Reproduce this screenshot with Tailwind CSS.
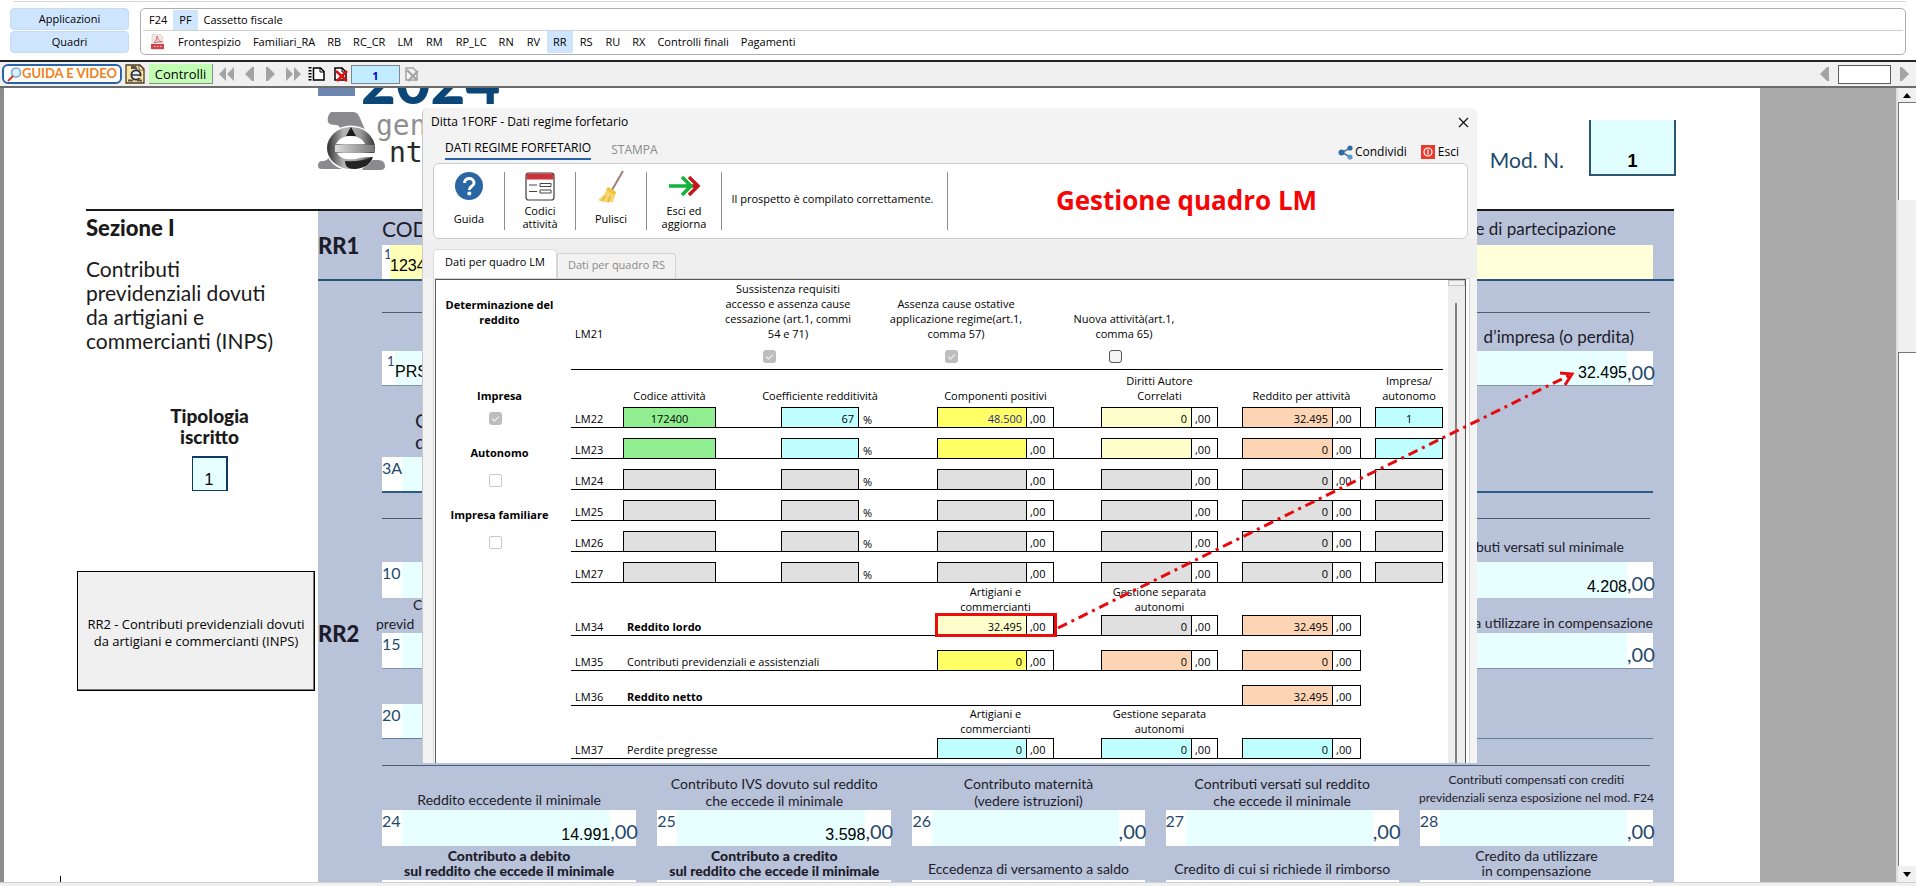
<!DOCTYPE html>
<html lang="it">
<head>
<meta charset="utf-8">
<title>Ditta 1FORF - Dati regime forfetario</title>
<script src="https://cdn.jsdelivr.net/npm/@tailwindcss/browser@4"></script>
</head>
<body class="flex h-screen flex-col overflow-hidden bg-white font-['Open_Sans','Noto_Sans',sans-serif] text-[11px] text-black">

<!-- Application menu -->
<header class="shrink-0 px-[10px] pb-[5px]">
  <div class="ml-1 h-[2px] border-b border-[#d4d4d4]"></div>
  <div class="mt-[6px] flex gap-[11px]">
    <div class="flex w-[119px] flex-col gap-px">
      <button class="h-[22px] rounded-[4px] border border-[#c3dcf5] bg-[#cfe5fd]">Applicazioni</button>
      <button class="h-[22px] rounded-[4px] border border-[#c3dcf5] bg-[#cfe5fd]">Quadri</button>
    </div>
    <nav class="h-[47px] flex-1 rounded-[5px] border border-[#adadad] px-[2px]">
      <div class="flex h-[22px] items-stretch border-b border-[#cfcfcf] pt-px">
        <a href="#" class="flex items-center px-[6px]">F24</a>
        <a href="#" class="flex items-center bg-[#cfe5fd] px-[6px]">PF</a>
        <a href="#" class="flex items-center px-[6px]">Cassetto fiscale</a>
      </div>
      <div class="flex h-[22px] items-stretch">
        <a href="#" aria-label="PDF" class="flex w-[29px] items-center pl-[8px]">
          <svg width="13" height="16" viewBox="0 0 13 16"><path d="M1 0h8l3 3v13H1z" fill="#f1e6e6" stroke="#d9c4c4" stroke-width=".6"/><path d="M3 9c2-2 3-4 3-7 1 4 2 5 5 6-3-.5-5 0-8 1z" fill="none" stroke="#d0565a" stroke-width=".9"/><path d="M0 10h13v5H0z" fill="#cf4448"/><path d="M3 12.5h1.5M6 12.5h1.5M9 12.5h1.5" stroke="#f5d0d0"/></svg>
        </a>
        <a href="#" class="flex items-center px-[6px]">Frontespizio</a>
        <a href="#" class="flex items-center px-[6px]">Familiari_RA</a>
        <a href="#" class="flex items-center px-[6px]">RB</a>
        <a href="#" class="flex items-center px-[6px]">RC_CR</a>
        <a href="#" class="flex items-center px-[6px]">LM</a>
        <a href="#" class="flex items-center px-[7px]">RM</a>
        <a href="#" class="flex items-center px-[6px]">RP_LC</a>
        <a href="#" class="flex items-center px-[6px]">RN</a>
        <a href="#" class="flex items-center px-[7px]">RV</a>
        <a href="#" class="flex items-center bg-[#cfe5fd] px-[6px]">RR</a>
        <a href="#" class="flex items-center px-[7px]">RS</a>
        <a href="#" class="flex items-center px-[6px]">RU</a>
        <a href="#" class="flex items-center px-[6px]">RX</a>
        <a href="#" class="flex items-center px-[6px]">Controlli finali</a>
        <a href="#" class="flex items-center px-[6px]">Pagamenti</a>
      </div>
    </nav>
  </div>
</header>

<!-- Form toolbar -->
<div class="flex h-[28px] shrink-0 items-center border-y-2 border-t-[#222] border-b-[#6c6c6c] bg-[#f0f0f0] pl-[2px] pr-[6px]">
  <button class="flex h-[20px] w-[120px] items-center justify-center whitespace-nowrap rounded-[6px] border-2 border-[#2b64a6] bg-white font-['Lato',sans-serif] text-[13px] font-bold text-[#ee8222]">
    <svg width="15" height="15" viewBox="0 0 15 15"><circle cx="9" cy="5.500" r="4.500" fill="#dceffc" stroke="#7aa6d4" stroke-width="1.500"/><path d="M6 9L1 14" stroke="#d93a2b" stroke-width="2"/></svg>
    GUIDA E VIDEO
  </button>
  <button aria-label="Entrate" class="ml-[3px]">
    <svg class="block" width="20" height="20" viewBox="0 0 20 20"><path d="M1 1h14l4 4v14H1z" fill="#fbe3a2" stroke="#4c3d1c" stroke-width="1.300"/><path d="M14 1v5h5z" fill="#fff3cc" stroke="#4c3d1c" stroke-width=".8"/><path d="M6 2h5l2 4-3-1H6z" fill="#555"/><circle cx="11" cy="11" r="4.600" fill="#e8eefc" stroke="#2a2a33" stroke-width="1.800"/><path d="M7 11h8" stroke="#2a2a33" stroke-width="1.400"/><path d="M12 12.300h5v1.800h-5z" fill="#fbe3a2"/><path d="M3 16.500h5M12 16.500h5" stroke="#555" stroke-width="1.800"/></svg>
  </button>
  <button class="ml-1 h-[20px] w-[64px] border-b border-r border-[#8a8a8a] bg-[#c2ffb4] text-[13px] leading-[18px]">Controlli</button>
  <div class="ml-[6px] flex items-center gap-[10px]">
    <button aria-label="Primo"><svg class="block" width="15" height="14" viewBox="0 0 15 14" fill="#a3a3a3"><path d="M7 0v14L0 7zM15 0v14L8 7z"/></svg></button>
    <button aria-label="Precedente"><svg class="block" width="11" height="14" viewBox="0 0 11 14" fill="#a3a3a3"><path d="M8 0h2v14H8L1 7z"/></svg></button>
    <button aria-label="Successivo"><svg class="block" width="11" height="14" viewBox="0 0 11 14" fill="#a3a3a3"><path d="M3 0H1v14h2l7-7z"/></svg></button>
    <button aria-label="Ultimo"><svg class="block" width="15" height="14" viewBox="0 0 15 14" fill="#a3a3a3"><path d="M0 0v14l7-7zM8 0v14l7-7z"/></svg></button>
  </div>
  <button aria-label="Nuovo modulo" class="ml-[7px]"><svg class="block" width="17" height="14" viewBox="0 0 17 14"><path d="M5.500 1h7l3.500 3.500V13H5.500z" fill="#fff" stroke="#000" stroke-width="1.500"/><path d="M12 1v4h4" fill="none" stroke="#000"/><path d="M2 0v14" stroke="#000" stroke-width="3" stroke-dasharray="1.500 1.500"/></svg></button>
  <button aria-label="Elimina modulo" class="ml-[8px]"><svg class="block" width="16" height="15" viewBox="0 0 16 15"><path d="M2 1h7l4 4v8H2z" fill="#fff" stroke="#000" stroke-width="1.500"/><path d="M9 1v4h4" fill="none" stroke="#000"/><path d="M3 4l11 10M14 4L4 14" stroke="#e01010" stroke-width="2.600"/></svg></button>
  <input aria-label="Modulo" value="1" class="ml-[2px] h-[19px] w-[49px] border border-[#7d8790] bg-[#c1ecff] pt-[3px] text-center font-bold text-[#0000c8]">
  <button aria-label="Elimina" class="ml-[4px]"><svg class="block" width="16" height="15" viewBox="0 0 16 15"><path d="M2 1h7l4 4v8H2z" fill="#f4f4f4" stroke="#a3a3a3" stroke-width="1.500"/><path d="M3 3l10 10M14 4L4 14" stroke="#a3a3a3" stroke-width="2.200"/></svg></button>
  <div class="ml-auto flex items-center gap-[8px]">
    <button aria-label="Indietro"><svg class="block" width="11" height="14" viewBox="0 0 11 14" fill="#a3a3a3"><path d="M8 0h2v14H8L1 7z"/></svg></button>
    <input aria-label="Cerca" class="h-[19px] w-[53px] border border-[#5c5c5c] bg-white">
    <button aria-label="Avanti"><svg class="block" width="11" height="14" viewBox="0 0 11 14" fill="#a3a3a3"><path d="M3 0H1v14h2l7-7z"/></svg></button>
  </div>
</div>

<main class="relative flex min-h-0 flex-1 overflow-hidden border-l-4 border-[#8c8c8c]">

  <!-- Tax form page -->
  <section class="w-[1756px] shrink-0 font-['Lato',sans-serif] text-[#1c1c2a]">
    <div class="flex h-[121px] justify-between pl-[314px] pr-[84px]">
      <div>
        <div class="flex h-[16px] items-end gap-[6px] overflow-hidden">
          <div class="h-[8px] w-[37px] self-start bg-[#6c86b0]"></div>
          <div class="text-[60px] font-black leading-[46px] text-[#0b4679]">2024</div>
        </div>
        <div class="mt-[8px] flex">
          <svg width="67" height="58" viewBox="0 0 67 58" class="shrink-0">
            <defs>
              <linearGradient id="ring" x1="0" y1="0" x2="1" y2="0"><stop offset="0" stop-color="#2e2e2e"/><stop offset=".35" stop-color="#b5b5b5"/><stop offset=".7" stop-color="#9a9a9a"/><stop offset="1" stop-color="#333"/></linearGradient>
              <linearGradient id="bar" x1="0" y1="0" x2="1" y2="0"><stop offset="0" stop-color="#dcdcdc"/><stop offset="1" stop-color="#777"/></linearGradient>
            </defs>
            <path d="M14 0h20c5 0 6 2 8 6l6 14-14-5-12 2c0-3-2-4-4-4-8 0-9-3-8-8 1-3 2-5 4-5z" fill="#8b8b8d"/>
            <path d="M0 54c0-5 3-5 6-5 4-1 5-4 7-7l12 15H4c-3 0-4-1-4-3zM50 48h10c5 0 7 3 7 6s-2 4-5 4H44z" fill="#8b8b8d"/>
            <ellipse cx="33" cy="36" rx="25.500" ry="22.500" fill="#fff"/>
            <ellipse cx="33" cy="36" rx="24" ry="21" fill="url(#ring)"/>
            <path d="M33 15l5 9H28z" fill="#1d1d1d"/>
            <path d="M18 32c3-6 9-8 15-8s12 3 14 8z" fill="#fff"/>
            <path d="M17 33h39l1 7H17z" fill="url(#bar)"/>
            <path d="M19 41h39v4c-7 0-14 0-20 2-8 1-16 0-19-6z" fill="#fff"/>
            <path d="M27 49c9 1 17 0 28-4-2 7-9 12-19 12-6 0-9-3-9-8z" fill="#232323"/>
          </svg>
          <div class="-ml-[9px] font-['DejaVu_Sans_Mono',monospace] text-[28px] leading-[27px]">
            <div class="text-[#8f8f8f]">gen</div>
            <div class="pl-[13px] text-[#2b2b2b]">nt</div>
          </div>
        </div>
      </div>
      <div class="flex items-end gap-[25px] pb-[33px]">
        <span class="pb-1 text-[21px] leading-[24px] text-[#1d4a6c]">Mod. N.</span>
        <input aria-label="Modulo numero" value="1" class="h-[56px] w-[87px] border-2 border-t-0 border-[#2a5673] bg-[#e0feff] pt-[28px] text-center font-['Liberation_Sans',sans-serif] text-[18px] font-bold text-black">
      </div>
    </div>

    <div class="ml-[82px] flex h-[673px] w-[1588px] border-t-2 border-[#1a1a1a]">
      <aside class="flex w-[232px] shrink-0 flex-col items-start pt-[3px] text-[#1a1a1a]">
        <h2 class="text-[22px] font-black leading-[28px]">Sezione I</h2>
        <p class="mt-[15px] whitespace-nowrap text-[21px] leading-[24px]">Contributi<br>previdenziali dovuti<br>da artigiani e<br>commercianti (INPS)</p>
        <div class="mt-[52px] flex w-full flex-col items-center pl-[15px]">
          <label for="tipologia" class="text-center text-[19px] font-black leading-[21px]">Tipologia<br>iscritto</label>
          <input id="tipologia" value="1" class="mt-[9px] h-[35px] w-[36px] border border-r-2 border-t-2 border-[#0c3c66] bg-[#e6ffff] pt-[12px] text-center font-['Liberation_Sans',sans-serif] text-[16px] text-black">
        </div>
        <button class="-ml-[9px] mt-[80px] h-[120px] w-[238px] border border-black bg-[#f0f0f0] pt-[3px] font-['Open_Sans',sans-serif] text-[13px] font-normal leading-[17px] text-black shadow-[inset_-1px_-1px_0_#777]">RR2 - Contributi previdenziali dovuti<br>da artigiani e commercianti (INPS)</button>
        <div class="-ml-[26px] mt-auto h-[6px] w-px bg-black"></div>
      </aside>

      <div class="flex flex-1 flex-col bg-[#b8c2d9]">
        <!-- RR1 -->
        <div class="flex h-[70px] shrink-0 border-b-2 border-[#2b5479]">
          <h3 class="w-[64px] pt-[21px] text-[22px] font-black leading-[28px]">RR1</h3>
          <div class="flex w-[1271px] flex-col">
            <div class="flex h-[34px] justify-between pr-[37px] pt-[6px] text-[21px] leading-[24px]"><span>COD</span><span class="text-[17px]">e di partecipazione</span></div>
            <div class="flex h-[34px] bg-[#ffffd9]">
              <span class="w-[8px] bg-white pl-[2px] text-[13px] leading-[18px] text-[#1d4a6c]">1</span>
              <input aria-label="Codice INPS" value="1234" class="w-[200px] bg-[#ffffb8] pt-[8px] font-['Liberation_Sans',sans-serif] text-[16px] text-black">
            </div>
          </div>
        </div>
        <!-- RR2 -->
        <div class="flex min-h-0 flex-1">
          <h3 class="w-[64px] pt-[339px] text-[22px] font-black leading-[28px]">RR2</h3>
          <div class="flex w-[1271px] flex-col">
            <div class="mr-[3px] h-[32px] shrink-0 border-b border-[#4d5a73]"></div>
            <div class="flex h-[38px] shrink-0 items-end justify-end pb-[3px] pr-[19px] text-[17px] leading-[22px]">d’impresa (o perdita)</div>
            <div class="flex h-[35px] shrink-0 border-b border-[#8391ab] bg-[#e8ffff]">
              <span class="w-[13px] bg-white pl-[5px] text-[13px] leading-[20px] text-[#1d4a6c]">1</span>
              <input aria-label="Codice fiscale" value="PRS" class="w-[200px] pt-[8px] font-['Liberation_Sans',sans-serif] text-[16px] text-black">
              <div class="ml-auto flex"><input aria-label="Reddito d'impresa" value="32.495" class="w-[120px] pt-[10px] text-right font-['Liberation_Sans',sans-serif] text-[16px] text-black"><span class="w-[26px] bg-white pt-[9px] text-right text-[20px] leading-[24px] text-[#1d4a6c]">,00</span></div>
            </div>
            <div class="flex h-[71px] shrink-0 items-end pb-[5px] pl-[33px] text-[20px] leading-[21px]"><span>C<br>d</span></div>
            <div class="flex h-[36px] shrink-0 border-b-2 border-[#2b5c85]"><span class="w-[20px] bg-white text-[16px] leading-[22px] text-[#1d4a6c]">3A</span><span class="w-[300px] bg-[#e8ffff]"></span></div>
            <div class="mr-[3px] h-[26px] shrink-0 border-b border-[#4d5a73]"></div>
            <div class="flex h-[43px] shrink-0 items-end justify-end pb-[5px] pr-[29px] text-[14px] leading-[20px]">ributi versati sul minimale</div>
            <div class="flex h-[36px] shrink-0 bg-[#e8ffff]">
              <span class="w-[20px] bg-white text-[16px] leading-[22px] text-[#1d4a6c]">10</span>
              <div class="ml-auto flex"><input aria-label="Contributi versati sul minimale" value="4.208" class="w-[120px] pt-[14px] text-right font-['Liberation_Sans',sans-serif] text-[16px] text-black"><span class="w-[26px] bg-white pt-[9px] text-right text-[20px] leading-[24px] text-[#1d4a6c]">,00</span></div>
            </div>
            <div class="-ml-[6px] flex h-[35px] shrink-0 items-end justify-between whitespace-nowrap text-[14px] leading-[19px]"><span><span class="pl-[37px]">C</span><br>previd</span><span class="pb-px">a utilizzare in compensazione</span></div>
            <div class="flex h-[36px] shrink-0 border-b border-[#8391ab] bg-[#e8ffff]">
              <span class="w-[20px] bg-white text-[16px] leading-[22px] text-[#1d4a6c]">15</span>
              <span class="ml-auto w-[26px] bg-white pt-[9px] text-right text-[20px] leading-[24px] text-[#1d4a6c]">,00</span>
            </div>
            <div class="h-[35px] shrink-0"></div>
            <div class="flex h-[35px] shrink-0 border-b border-[#5e80a3]"><span class="w-[20px] bg-white text-[16px] leading-[22px] text-[#1d4a6c]">20</span><span class="w-[300px] bg-[#e8ffff]"></span></div>
            <div class="mr-[3px] h-[27px] shrink-0 border-b border-[#4d5a73]"></div>
            <div class="grid min-h-0 flex-1 grid-cols-[minmax(0,254fr)_minmax(0,234fr)_minmax(0,232fr)_minmax(0,233fr)_minmax(0,233fr)] gap-x-[21px] text-[14px] leading-[17px]">
              <div class="flex flex-col">
                <label for="f24" class="flex h-[44px] items-end justify-center whitespace-nowrap pb-[2px] text-center">Reddito eccedente il minimale</label>
                <div class="flex h-[36px] bg-[#e8ffff]"><span class="w-[20px] bg-white text-[16px] leading-[22px] text-[#1d4a6c]">24</span><input id="f24" value="14.991" class="min-w-0 flex-1 pt-[13px] text-right font-['Liberation_Sans',sans-serif] text-[16px] text-black"><span class="w-[26px] bg-white pt-[9px] text-right text-[20px] leading-[24px] text-[#1d4a6c]">,00</span></div>
                <div class="flex h-[34px] items-center justify-center whitespace-nowrap text-center font-black leading-[15px]">Contributo a debito<br>sul reddito che eccede il minimale</div>
                <div class="h-[2px] bg-white"></div>
              </div>
              <div class="flex flex-col">
                <label for="f25" class="flex h-[44px] items-end justify-center whitespace-nowrap pb-[1px] text-center">Contributo IVS dovuto sul reddito<br>che eccede il minimale</label>
                <div class="flex h-[36px] bg-[#e8ffff]"><span class="w-[20px] bg-white text-[16px] leading-[22px] text-[#1d4a6c]">25</span><input id="f25" value="3.598" class="min-w-0 flex-1 pt-[13px] text-right font-['Liberation_Sans',sans-serif] text-[16px] text-black"><span class="w-[26px] bg-white pt-[9px] text-right text-[20px] leading-[24px] text-[#1d4a6c]">,00</span></div>
                <div class="flex h-[34px] items-center justify-center whitespace-nowrap text-center font-black leading-[15px]">Contributo a credito<br>sul reddito che eccede il minimale</div>
                <div class="h-[2px] bg-white"></div>
              </div>
              <div class="flex flex-col">
                <label for="f26" class="flex h-[44px] items-end justify-center whitespace-nowrap pb-[1px] text-center">Contributo maternità<br>(vedere istruzioni)</label>
                <div class="flex h-[36px] bg-[#e8ffff]"><span class="w-[20px] bg-white text-[16px] leading-[22px] text-[#1d4a6c]">26</span><input id="f26" class="min-w-0 flex-1"><span class="w-[26px] bg-white pt-[9px] text-right text-[20px] leading-[24px] text-[#1d4a6c]">,00</span></div>
                <div class="flex h-[34px] items-end justify-center whitespace-nowrap pb-[3px] text-center">Eccedenza di versamento a saldo</div>
                <div class="h-[2px] bg-white"></div>
              </div>
              <div class="flex flex-col">
                <label for="f27" class="flex h-[44px] items-end justify-center whitespace-nowrap pb-[1px] text-center">Contributi versati sul reddito<br>che eccede il minimale</label>
                <div class="flex h-[36px] bg-[#e8ffff]"><span class="w-[20px] bg-white text-[16px] leading-[22px] text-[#1d4a6c]">27</span><input id="f27" class="min-w-0 flex-1"><span class="w-[26px] bg-white pt-[9px] text-right text-[20px] leading-[24px] text-[#1d4a6c]">,00</span></div>
                <div class="flex h-[34px] items-end justify-center whitespace-nowrap pb-[3px] text-center">Credito di cui si richiede il rimborso</div>
                <div class="h-[2px] bg-white"></div>
              </div>
              <div class="flex flex-col">
                <label for="f28" class="flex h-[44px] items-end justify-center whitespace-nowrap pb-[3px] text-center text-[12px] leading-[18px]">Contributi compensati con crediti<br>previdenziali senza esposizione nel mod. F24</label>
                <div class="flex h-[36px] bg-[#e8ffff]"><span class="w-[20px] bg-white text-[16px] leading-[22px] text-[#1d4a6c]">28</span><input id="f28" class="min-w-0 flex-1"><span class="w-[26px] bg-white pt-[9px] text-right text-[20px] leading-[24px] text-[#1d4a6c]">,00</span></div>
                <div class="flex h-[34px] items-center justify-center whitespace-nowrap text-center leading-[15px]">Credito da utilizzare<br>in compensazione</div>
                <div class="h-[2px] bg-white"></div>
              </div>
            </div>
          </div>
        </div>
      </div>
    </div>
  </section>
  <div class="flex-1 bg-[#ababab]"></div>

  <!-- Page scrollbar -->
  <div class="flex w-[20px] shrink-0 flex-col border-l-2 border-[#dedede] bg-[#f0f0f0]">
    <button aria-label="Su" class="flex h-[15px] items-center justify-center border-b border-[#777]"><svg width="8" height="5" viewBox="0 0 8 5"><path d="M4 0l4 5H0z"/></svg></button>
    <div class="h-[97px] border-l border-[#777] bg-white"></div>
    <div class="h-[152px]"></div>
    <div class="flex-1 border-l border-t border-[#777] bg-white"></div>
    <button aria-label="Giù" class="flex h-[16px] items-center justify-center"><svg width="8" height="5" viewBox="0 0 8 5"><path d="M4 5l4-5H0z"/></svg></button>
  </div>

  <!-- Dialog window -->
  <div role="dialog" aria-label="Dati regime forfetario" class="absolute left-[418px] top-[20px] flex h-[655px] w-[1055px] flex-col overflow-hidden rounded-t-[6px] border-l border-[#c9c9c9] bg-[#f3f3f3]">
    <div class="flex h-[28px] shrink-0 items-center justify-between pl-[8px] pr-[8px]">
      <span class="text-[12px]">Ditta 1FORF - Dati regime forfetario</span>
      <button aria-label="Chiudi"><svg class="block" width="11" height="11" viewBox="0 0 11 11"><path d="M1 1l9 9M10 1l-9 9" stroke="#111" stroke-width="1.200"/></svg></button>
    </div>
    <div class="flex h-[27px] shrink-0 items-start justify-between pl-[22px] pr-[18px] text-[12px]">
      <div class="flex gap-[20px]">
        <button class="border-b-2 border-[#2a62a8] pb-[2px] pt-[4px] leading-[16px]">DATI REGIME FORFETARIO</button>
        <button class="pb-px pt-[4px] leading-[16px] text-[#8a8a8a]">STAMPA</button>
      </div>
      <div class="flex gap-[14px] pt-[7px]">
        <button class="flex items-center gap-[2px]"><svg width="15" height="15" viewBox="0 0 15 15"><path d="M12 3L4 7.500l8 4.500" fill="none" stroke="#4a7aa8" stroke-width="1.500"/><circle cx="12" cy="3" r="2.600" fill="#2f6ca3"/><circle cx="3.500" cy="7.500" r="3" fill="#2f6ca3"/><circle cx="12" cy="12" r="2.600" fill="#5a9ad0"/></svg>Condividi</button>
        <button class="flex items-center gap-[3px]"><svg width="14" height="14" viewBox="0 0 14 14"><path d="M0 0h14v14H0z" fill="#e8392c"/><circle cx="7" cy="7" r="4" fill="none" stroke="#fff" stroke-width="1.200"/><path d="M7 4.500v5" stroke="#fff" stroke-width="1.300"/></svg>Esci</button>
      </div>
    </div>
    <div class="ml-[10px] mr-[9px] flex h-[76px] shrink-0 items-center rounded-[6px] border border-[#cdcdcd] bg-white">
      <button class="flex h-[58px] w-[71px] flex-col items-center border-r border-[#8f8f8f] leading-[13px]">
        <svg width="28" height="28" viewBox="0 0 28 28" class="mb-[12px] shrink-0"><circle cx="14" cy="14" r="14" fill="#2a66a4"/><path d="M9.500 11c0-6 9.500-6 9.500 0 0 3.500-4.700 3.200-4.700 7" fill="none" stroke="#fff" stroke-width="3"/><circle cx="14.300" cy="21.500" r="2" fill="#fff"/></svg>
        Guida
      </button>
      <button class="flex h-[58px] w-[71px] flex-col items-center border-r border-[#8f8f8f] leading-[13px]">
        <svg width="30" height="29" viewBox="0 0 30 29" class="mb-[3px] shrink-0"><rect x="1" y="1" width="28" height="27" rx="2.500" fill="#fff" stroke="#3a3a3a" stroke-width="1.200"/><path d="M1.500 3q0-1.500 1.500-1.500h24q1.500 0 1.500 1.500v4.500h-27z" fill="#c9353a"/><path d="M4 13h8M4 19.500h8" stroke="#444" stroke-width="1.200"/><path d="M15 11.500h11v3H15zM15 18h11v3H15z" fill="none" stroke="#444"/></svg>
        Codici<br>attività
      </button>
      <button class="flex h-[58px] w-[71px] flex-col items-center border-r border-[#8f8f8f] leading-[13px]">
        <svg width="28" height="33" viewBox="0 0 28 33" class="-mt-[2px] mb-[9px] shrink-0"><path d="M26 1L15 20" stroke="#a08072" stroke-width="2"/><path d="M11 17l8 5-3 10c-5 1-11 0-15-2 4-3 8-7 10-13z" fill="#f7d568"/><path d="M11 17l8 5-1 3-9-5z" fill="#f3c03c"/><path d="M8 26l-3 5M13 26l-2 6" stroke="#d8a93a"/></svg>
        Pulisci
      </button>
      <button class="flex h-[58px] w-[75px] flex-col items-center border-r border-[#8f8f8f] leading-[13px]">
        <svg width="33" height="22" viewBox="0 0 33 22" class="mb-[7px] mt-[3px] shrink-0"><path d="M21 2l9 9-9 9M21 11h8" fill="none" stroke="#c8161d" stroke-width="3.500"/><path d="M1 11h22M14 2l9 9-9 9" fill="none" stroke="#15b23c" stroke-width="3.500"/></svg>
        Esci ed<br>aggiorna
      </button>
      <p class="flex h-[58px] w-[226px] items-center justify-center whitespace-nowrap border-r border-[#8f8f8f] pb-[4px] pr-[4px]">Il prospetto è compilato correttamente.</p>
      <h1 class="flex-1 pb-[2px] pr-[42px] text-center text-[26px] font-bold text-[#f50505]">Gestione quadro LM</h1>
    </div>
    <div class="flex h-[39px] shrink-0 items-end bg-[#efefef] pl-[10px]">
      <button class="h-[29px] w-[124px] rounded-t-[5px] border border-b-0 border-[#dadada] bg-white pb-[4px]">Dati per quadro LM</button>
      <button class="h-[25px] w-[119px] rounded-tr-[4px] border border-b-0 border-[#d4d4d4] bg-[#f2f2f2] pb-[2px] text-[#8a8a8a]">Dati per quadro RS</button>
    </div>

    <div class="ml-[10px] mr-[7px] min-h-0 flex-1 border border-b-0 border-[#d4d4d4] bg-white">
      <div class="ml-px mr-[3px] flex h-full border border-b-0 border-[#555]">
        <div class="w-[135px] shrink-0 text-center font-bold leading-[15px]">
          <p class="pt-[17px] pr-[8px]">Determinazione del<br>reddito</p>
          <div class="mt-[61px] flex flex-col items-center pr-[8px]"><label for="impresa">Impresa</label>
            <span class="relative mr-[8px] mt-[9px]"><input id="impresa" type="checkbox" checked disabled class="block size-[13px] appearance-none rounded-[3px] bg-[#bdbdbd]"><svg class="absolute inset-0" width="13" height="13" viewBox="0 0 13 13"><path d="M3 6.500l2.500 2.500L10 4.500" fill="none" stroke="#e9e9e9" stroke-width="1.300"/></svg></span></div>
          <div class="mt-[20px] flex flex-col items-center pr-[8px]"><label for="autonomo">Autonomo</label><input id="autonomo" type="checkbox" disabled class="mr-[8px] mt-[14px] block size-[13px] appearance-none rounded-[2px] border border-[#c9c9c9] bg-white"></div>
          <div class="mt-[20px] flex flex-col items-center pr-[8px]"><label for="familiare">Impresa familiare</label><input id="familiare" type="checkbox" disabled class="mr-[8px] mt-[14px] block size-[13px] appearance-none rounded-[2px] border border-[#c9c9c9] bg-white"></div>
        </div>
        <div class="w-[872px] shrink-0">
          <div class="flex h-[89px] pb-[6px]">
            <span class="w-[133px] self-end pb-[22px] pl-[4px] leading-[15px]">LM21</span>
            <div class="flex w-[168px] flex-col items-center justify-end text-center leading-[15px]">
              <label for="c1">Sussistenza requisiti<br>accesso e assenza cause<br>cessazione (art.1, commi<br>54 e 71)</label>
              <span class="relative mr-[38px] mt-[9px]"><input id="c1" type="checkbox" checked disabled class="block size-[13px] appearance-none rounded-[3px] bg-[#bdbdbd]"><svg class="absolute inset-0" width="13" height="13" viewBox="0 0 13 13"><path d="M3 6.500l2.500 2.500L10 4.500" fill="none" stroke="#e9e9e9" stroke-width="1.300"/></svg></span>
            </div>
            <div class="flex w-[168px] flex-col items-center justify-end text-center leading-[15px]">
              <label for="c2">Assenza cause ostative<br>applicazione regime(art.1,<br>comma 57)</label>
              <span class="relative mr-[10px] mt-[9px]"><input id="c2" type="checkbox" checked disabled class="block size-[13px] appearance-none rounded-[3px] bg-[#bdbdbd]"><svg class="absolute inset-0" width="13" height="13" viewBox="0 0 13 13"><path d="M3 6.500l2.500 2.500L10 4.500" fill="none" stroke="#e9e9e9" stroke-width="1.300"/></svg></span>
            </div>
            <div class="flex w-[168px] flex-col items-center justify-end text-center leading-[15px]">
              <label for="c3">Nuova attività(art.1,<br>comma 65)</label>
              <input id="c3" type="checkbox" class="mr-[18px] mt-[9px] block size-[13px] appearance-none rounded-[3px] border border-[#555] bg-[#f5f5f5]">
            </div>
          </div>
          <table class="w-[872px] table-fixed border-collapse leading-[15px]">
            <colgroup>
              <col class="w-[52px]"><col class="w-[93px]"><col class="w-[65px]"><col class="w-[78px]"><col class="w-[78px]"><col class="w-[90px]"><col class="w-[27px]"><col class="w-[47px]"><col class="w-[91px]"><col class="w-[26px]"><col class="w-[24px]"><col class="w-[91px]"><col class="w-[28px]"><col class="w-[14px]"><col class="w-[68px]">
            </colgroup>
            <tbody id="rows"></tbody>
          </table>
        </div>
        <div class="ml-auto flex w-[17px] flex-col bg-[#ededed]">
          <div class="h-[6px] border border-[#c4c4c4] bg-[#f2f2f2]"></div>
          <div class="ml-[7px] mt-[17px] w-[2px] flex-1 bg-[#808080]"></div>
        </div>
      </div>
    </div>
  </div>

  <!-- Pointer from LM34 to the form field -->
  <svg class="pointer-events-none absolute left-[1050px] top-[276px]" width="524" height="270" viewBox="0 0 524 270" fill="none" stroke="#e8090d" stroke-width="3">
    <path d="M4 264L516 11" stroke-dasharray="10 5 3 5"/>
    <path d="M506 9l12 1-7 11"/>
  </svg>
</main>
<footer class="h-[4px] shrink-0 border-t border-[#d0d0d0] bg-[#f0f0f0]"></footer>

<script>
const tone = { green: 'bg-[#90ee90]', cyan: 'bg-[#c0ffff]', yellow: 'bg-[#ffff66]', cream: 'bg-[#ffffcc]', peach: 'bg-[#fdd5b4]', gray: 'bg-[#e0e0e0]' };
const line = 'border-b border-black p-0 align-bottom';
const field = (id, name, value, color, align) =>
  `<td class="${line}"><input aria-label="${id} ${name}" value="${value}" class="block h-[20px] w-full border border-b-0 border-black pt-[2px] ${align} ${tone[color]}"></td>`;
const money = (id, name, cell, marked) => {
  if (!cell) return `<td colspan="2" class="${line}"></td>`;
  const frame = marked ? '<span class="absolute -bottom-[2px] -left-[2px] -top-[2px] w-[122px] border-[3px] border-[#ec0c0c]"></span>' : '';
  return `<td class="${line}"><div class="relative"><input aria-label="${id} ${name}" value="${cell[0]}" class="block h-[20px] w-full border border-b-0 border-black pr-[4px] pt-[2px] text-right ${tone[cell[1]]} ${cell[2] || ''}">${frame}</div></td>
    <td class="${line}"><div class="h-[20px] border-r border-t border-black pl-[3px] pt-[3px]">,00</div></td>`;
};
const gap = `<td class="${line}"></td>`;
const label = id => `<td class="${line} pb-px pl-[4px]">${id}</td>`;
const G = 'gray';
const activity = [
  ['LM22', '172400', 'green', '67', 'cyan', ['48.500', 'yellow', 'text-[#2a2a8c]'], ['0', 'cream'], ['32.495', 'peach'], '1', 'cyan'],
  ['LM23', '', 'green', '', 'cyan', ['', 'yellow'], ['', 'cream'], ['0', 'peach'], '', 'cyan'],
  ...['LM24', 'LM25', 'LM26', 'LM27'].map(id => [id, '', G, '', G, ['', G], ['', G], ['0', G], '', G]),
];
const totals = (id, text, strong, height, a, b, c, marked) =>
  `<tr class="${height}">${label(id)}<td colspan="4" class="${line} pb-px"><span class="pl-[4px] ${strong}">${text}</span></td>${money(id, 'artigiani', a, marked)}${gap}${money(id, 'autonomi', b)}${gap}${money(id, 'totale', c)}<td colspan="2"></td></tr>`;
const head = `<tr class="h-[32px] text-center"><td colspan="5"></td><th colspan="2" class="p-0 pb-px align-bottom font-normal">Artigiani e<br>commercianti</th><td></td><th colspan="2" class="whitespace-nowrap p-0 pb-px align-bottom font-normal">Gestione separata<br>autonomi</th><td colspan="5"></td></tr>`;
const th = 'border-t border-black p-0 pb-[4px] align-bottom font-normal whitespace-nowrap';
document.getElementById('rows').innerHTML =
  `<tr class="h-[37px] text-center"><td class="${th}"></td><th class="${th}">Codice attività</th><td class="${th}"></td><th class="${th}"><span class="flex justify-center">Coefficiente redditività</span></th><td class="${th}"></td><th colspan="2" class="${th}">Componenti positivi</th><td class="${th}"></td><th colspan="2" class="${th}">Diritti Autore<br>Correlati</th><td class="${th}"></td><th colspan="2" class="${th}">Reddito per attività</th><td class="${th}"></td><th class="${th}">Impresa/<br>autonomo</th></tr>` +
  activity.map((r, i) =>
    `<tr class="${i ? 'h-[31px]' : 'h-[21px]'}">${label(r[0])}${field(r[0], 'codice attività', r[1], r[2], 'text-center')}${gap}${field(r[0], 'coefficiente', r[3], r[4], 'pr-[4px] text-right')}<td class="${line}"><span class="pl-[4px]">%</span></td>${money(r[0], 'componenti', r[5])}${gap}${money(r[0], 'diritti', r[6])}${gap}${money(r[0], 'reddito', r[7])}${gap}${field(r[0], 'impresa', r[8], r[9], 'text-center')}</tr>`).join('') +
  head +
  totals('LM34', 'Reddito lordo', 'font-bold', 'h-[21px]', ['32.495', 'cream'], ['0', G], ['32.495', 'peach'], true) +
  totals('LM35', 'Contributi previdenziali e assistenziali', '', 'h-[35px]', ['0', 'yellow'], ['0', 'peach'], ['0', 'peach']) +
  totals('LM36', 'Reddito netto', 'font-bold', 'h-[35px]', null, null, ['32.495', 'peach']) +
  head.replace('h-[32px]', 'h-[29px]') +
  totals('LM37', 'Perdite pregresse', '', 'h-[21px]', ['0', 'cyan'], ['0', 'cyan'], ['0', 'cyan']);
</script>
</body>
</html>
